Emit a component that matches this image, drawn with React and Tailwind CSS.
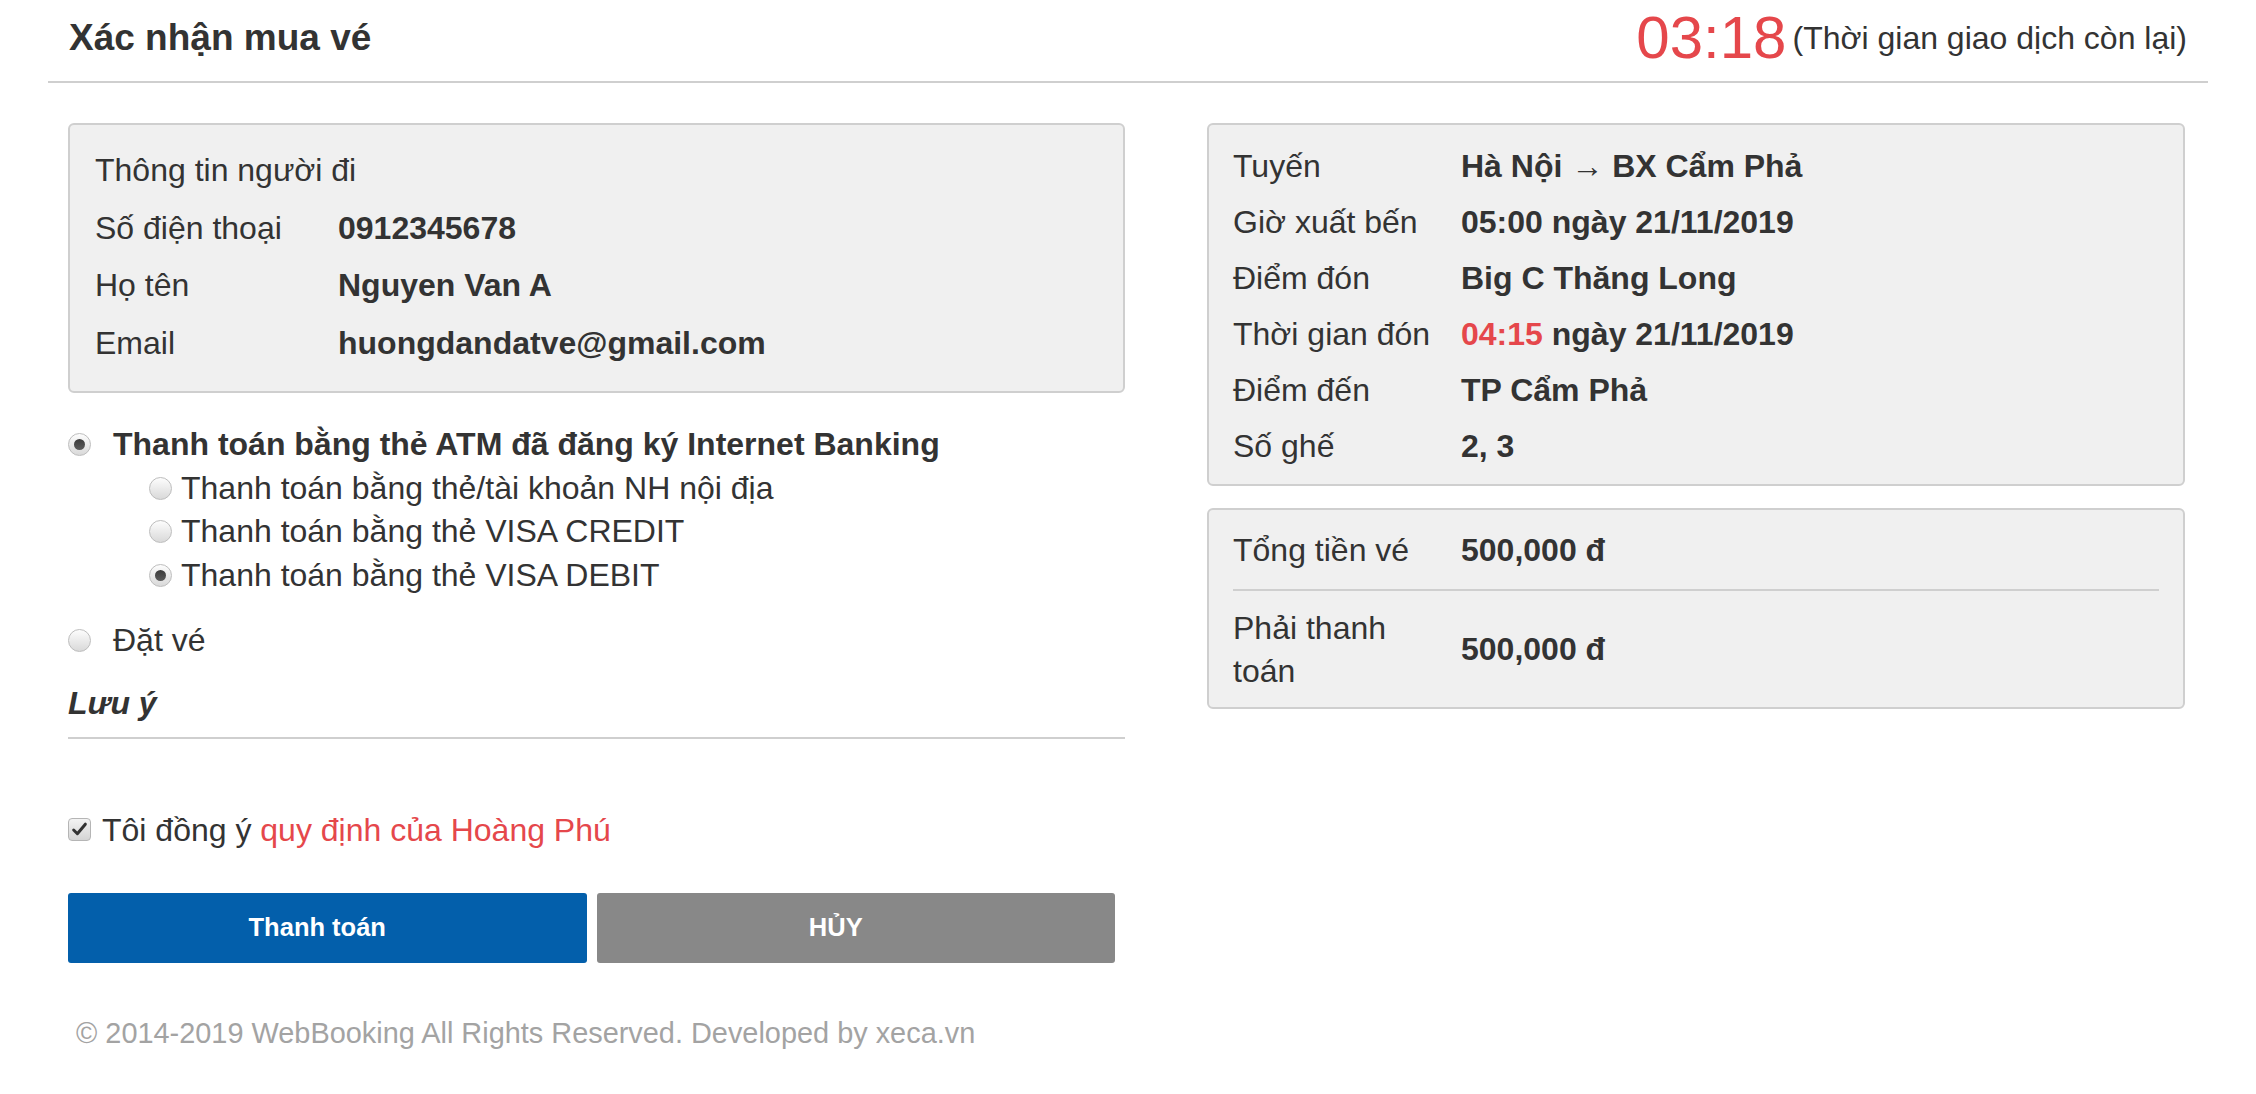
import React from "react";

const Radio = ({ checked }) => (
  <span className="inline-flex w-[23px] h-[23px] shrink-0 items-center justify-center rounded-full border border-[#bdbdbd] bg-gradient-to-b from-[#fdfdfd] to-[#d9d9d9]">
    {checked && <span className="block w-[11px] h-[11px] rounded-full bg-gradient-to-b from-[#3c3c3c] to-[#5c5c5c]" />}
  </span>
);

const Row = ({ label, children, labelW }) => (
  <div className="flex">
    <div className={labelW}>{label}</div>
    <div className="font-bold">{children}</div>
  </div>
);

export default function App() {
  return (
    <div
      className="min-h-screen bg-white text-[#333]"
      style={{ fontFamily: '"Liberation Sans", Arial, sans-serif' }}
    >
      <div className="w-[2160px] mx-auto">
        {/* header */}
        <div className="h-[83px] flex items-center justify-between border-b-2 border-[#cfcfcf] px-[21px] pb-[6px]">
          <h1 className="text-[37px] font-bold">Xác nhận mua vé</h1>
          <div className="flex items-center gap-[6px]">
            <span className="text-[60px] leading-none text-[#e5474b]">03:18</span>
            <span className="text-[32px]">(Thời gian giao dịch còn lại)</span>
          </div>
        </div>

        <div className="flex justify-between pl-[20px] pr-[23px] pt-[40px]">
          {/* left column */}
          <div className="w-[1057px] text-[32px]">
            <div className="rounded-[6px] border-2 border-[#cfcfcf] bg-[#f0f0f0] px-[25px] pt-[17px] pb-[19px] leading-[57.5px]">
              <div>Thông tin người đi</div>
              <Row label="Số điện thoại" labelW="w-[243px]">0912345678</Row>
              <Row label="Họ tên" labelW="w-[243px]">Nguyen Van A</Row>
              <Row label="Email" labelW="w-[243px]">huongdandatve@gmail.com</Row>
            </div>

            <div className="mt-[30px] leading-[43.5px]">
              <div className="flex items-center gap-[22px] font-bold">
                <Radio checked />
                <span>Thanh toán bằng thẻ ATM đã đăng ký Internet Banking</span>
              </div>
              <div className="pl-[81px]">
                <div className="flex items-center gap-[9px]">
                  <Radio />
                  <span>Thanh toán bằng thẻ/tài khoản NH nội địa</span>
                </div>
                <div className="flex items-center gap-[9px]">
                  <Radio />
                  <span>Thanh toán bằng thẻ VISA CREDIT</span>
                </div>
                <div className="flex items-center gap-[9px]">
                  <Radio checked />
                  <span>Thanh toán bằng thẻ VISA DEBIT</span>
                </div>
              </div>
              <div className="mt-[21.5px] flex items-center gap-[22px]">
                <Radio />
                <span>Đặt vé</span>
              </div>
              <div className="mt-[20px] pb-[11px] border-b-2 border-[#cfcfcf] font-bold italic">
                Lưu ý
              </div>
            </div>

            <div className="mt-[69px] flex items-center gap-[11px] leading-[44px]">
              <span className="inline-flex w-[23px] h-[23px] shrink-0 items-center justify-center rounded-[4px] border border-[#b5b5b5] bg-gradient-to-b from-[#f4f4f4] to-[#d4d4d4]">
                <svg viewBox="0 0 16 16" className="w-[17px] h-[17px]">
                  <path d="M2.5 8.5 L6 12 L13.5 3" fill="none" stroke="#333" strokeWidth="2.8" strokeLinecap="round" strokeLinejoin="round" />
                </svg>
              </span>
              <span>
                Tôi đồng ý <span className="text-[#e5474b]">quy định của Hoàng Phú</span>
              </span>
            </div>

            <div className="mt-[41px] grid grid-cols-2 gap-[10px] w-[1047px]">
              <button className="h-[70px] rounded-[3px] bg-[#035fab] pr-[20px] text-white font-bold text-[25.5px]">
                Thanh toán
              </button>
              <button className="h-[70px] rounded-[3px] bg-[#888888] pr-[40px] text-white font-bold text-[25.5px]">
                HỦY
              </button>
            </div>

            <div className="mt-[49px] pl-[8px] text-[28.9px] text-[#a3a3a3]">
              © 2014-2019 WebBooking All Rights Reserved. Developed by xeca.vn
            </div>
          </div>

          {/* right column */}
          <div className="w-[978px] text-[32px]">
            <div className="rounded-[6px] border-2 border-[#cfcfcf] bg-[#f0f0f0] px-[24px] pt-[12.5px] pb-[10.5px] leading-[56px]">
              <Row label="Tuyến" labelW="w-[228px]">Hà Nội → BX Cẩm Phả</Row>
              <Row label="Giờ xuất bến" labelW="w-[228px]">05:00 ngày 21/11/2019</Row>
              <Row label="Điểm đón" labelW="w-[228px]">Big C Thăng Long</Row>
              <Row label="Thời gian đón" labelW="w-[228px]">
                <span className="text-[#e5474b]">04:15</span> ngày 21/11/2019
              </Row>
              <Row label="Điểm đến" labelW="w-[228px]">TP Cẩm Phả</Row>
              <Row label="Số ghế" labelW="w-[228px]">2, 3</Row>
            </div>

            <div className="mt-[22px] rounded-[6px] border-2 border-[#cfcfcf] bg-[#f0f0f0] px-[24px] leading-[43px]">
              <div className="flex items-center pt-[18.5px] pb-[17px] border-b-2 border-[#cfcfcf]">
                <div className="w-[228px] pr-[20px]">Tổng tiền vé</div>
                <div className="font-bold">500,000 đ</div>
              </div>
              <div className="flex items-center pt-[16px] pb-[14.5px]">
                <div className="w-[228px] pr-[20px]">Phải thanh toán</div>
                <div className="font-bold">500,000 đ</div>
              </div>
            </div>
          </div>
        </div>
      </div>
    </div>
  );
}
